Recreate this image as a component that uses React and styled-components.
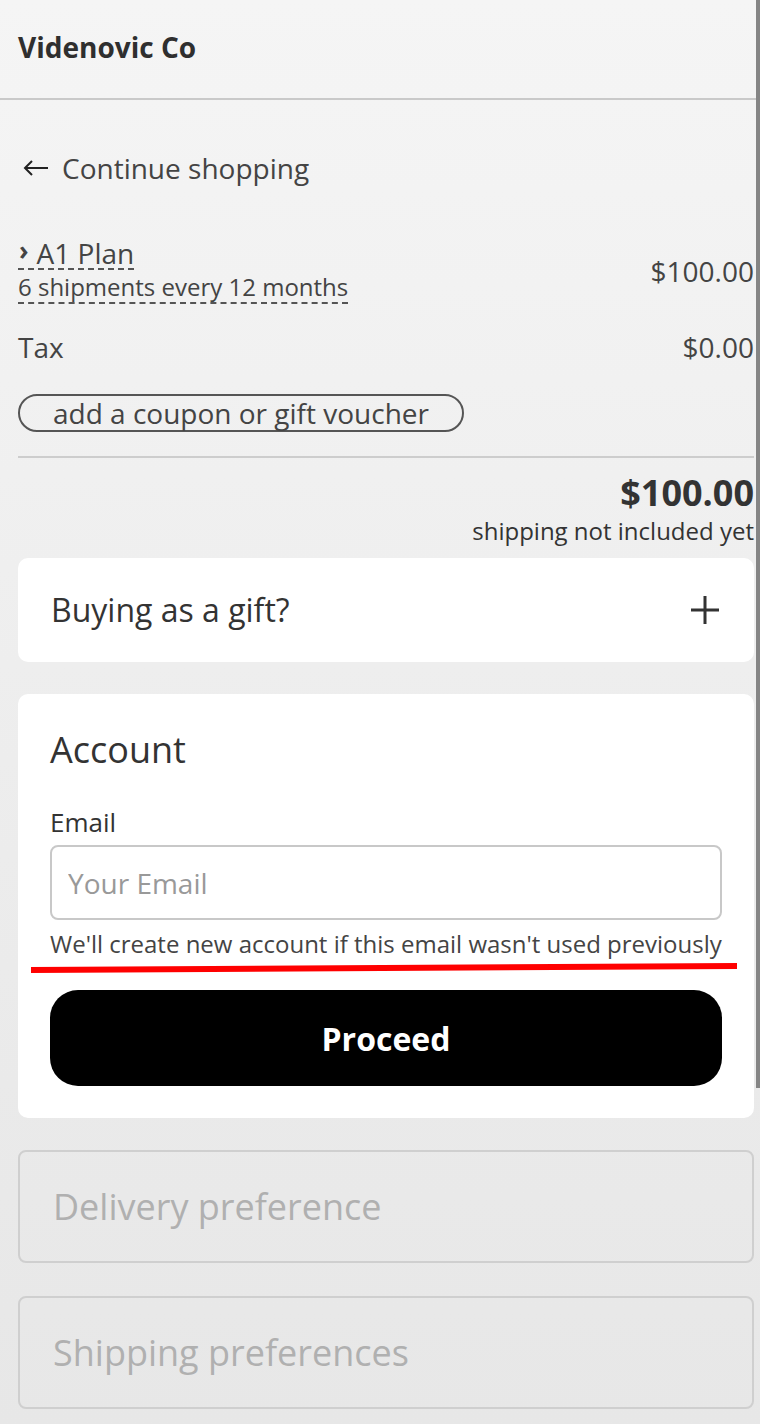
import React from "react";
import styled, { createGlobalStyle } from "styled-components";

const GlobalStyle = createGlobalStyle`
  html, body {
    margin: 0;
    padding: 0;
  }
  body {
    font-family: "Open Sans", "Noto Sans", "Liberation Sans", sans-serif;
    color: #333;
    background: linear-gradient(180deg, #f5f5f5 0%, #ececec 60%, #e7e7e7 100%);
    min-height: 1424px;
  }
  * { box-sizing: border-box; }
`;

const Page = styled.div`
  position: relative;
  width: 760px;
  min-height: 1424px;
  padding-right: 4px;
`;

const Scrollbar = styled.div`
  position: absolute;
  top: 0;
  right: 0;
  width: 4px;
  height: 1088px;
  background: #858585;
`;

const Header = styled.header`
  height: 100px;
  display: flex;
  align-items: center;
  padding: 0 0 5px 18px;
  border-bottom: 2px solid #c9c9c9;
`;

const Brand = styled.h1`
  margin: 0;
  font-size: 28px;
  font-weight: 700;
  color: #2f2f2f;
`;

const Main = styled.main`
  display: flex;
  flex-direction: column;
  padding: 0 2px 0 18px;
`;

const BackLink = styled.a`
  display: flex;
  align-items: center;
  gap: 13px;
  margin-top: 50px;
  height: 36px;
  font-size: 28px;
  color: #444;
  text-decoration: none;
  svg { margin-left: 5px; }
`;

const Row = styled.div`
  display: flex;
  justify-content: space-between;
  align-items: center;
  margin-top: ${(p) => p.$mt || 0}px;
`;

const PlanInfo = styled.div`
  display: flex;
  flex-direction: column;
  align-items: flex-start;
  gap: 2px;
`;

const Dashed = styled.span`
  display: inline-flex;
  align-items: center;
  gap: 8px;
  font-size: ${(p) => p.$size}px;
  line-height: 30px;
  color: #444;
  border-bottom: 2px dashed #555;
`;

const Chevron = styled.span`
  font-weight: 700;
  font-size: 26px;
  position: relative;
  top: -3px;
  margin-left: 1px;
`;

const Amount = styled.span`
  font-size: 28px;
  line-height: 36px;
  color: #444;
`;

const Label = styled.span`
  font-size: 28px;
  color: #444;
  line-height: 36px;
`;

const CouponButton = styled.button`
  align-self: flex-start;
  margin-top: 29px;
  height: 38px;
  padding: 0 33px;
  border: 2px solid #555;
  border-radius: 20px;
  background: transparent;
  font-family: inherit;
  font-size: 28px;
  color: #444;
  line-height: 34px;
`;

const Divider = styled.hr`
  width: 100%;
  margin: 24px 0 0;
  border: 0;
  border-top: 2px solid #cdcdcd;
`;

const Totals = styled.div`
  display: flex;
  flex-direction: column;
  align-items: flex-end;
  margin-top: 13px;
`;

const Total = styled.span`
  font-size: 36px;
  font-weight: 700;
  line-height: 44px;
  color: #333;
`;

const TotalNote = styled.span`
  margin-top: 1px;
  font-size: 24px;
  line-height: 30px;
  color: #333;
`;

const Card = styled.section`
  position: relative;
  background: #fff;
  border-radius: 10px;
  margin-top: ${(p) => p.$mt}px;
  padding: ${(p) => p.$pad};
`;

const GiftCard = styled(Card)`
  height: 104px;
  display: flex;
  align-items: center;
  justify-content: space-between;
`;

const CardTitle = styled.h2`
  margin: 0;
  font-weight: 400;
  font-size: ${(p) => p.$size}px;
  line-height: ${(p) => p.$lh}px;
  color: #333;
`;

const FieldLabel = styled.label`
  display: block;
  margin-top: 33px;
  font-size: 26px;
  line-height: 34px;
  color: #333;
`;

const Input = styled.input`
  display: block;
  width: 100%;
  height: 75px;
  margin-top: 6px;
  padding: 0 16px;
  border: 2px solid #c8c8c8;
  border-radius: 8px;
  font-family: inherit;
  font-size: 28px;
  color: #333;
  outline: none;
  &::placeholder { color: #999; }
`;

const Helper = styled.p`
  margin: 9px 0 0;
  font-size: 24px;
  line-height: 30px;
  color: #444;
  white-space: nowrap;
`;

const Annotation = styled.svg`
  position: absolute;
  left: 13px;
  top: 268px;
`;

const ProceedButton = styled.button`
  display: block;
  width: 100%;
  height: 96px;
  margin-top: 31px;
  border: 0;
  border-radius: 28px;
  background: #000;
  color: #fff;
  font-family: inherit;
  font-size: 32px;
  font-weight: 700;
`;

const Disabled = styled.section`
  height: 113px;
  margin-top: ${(p) => p.$mt}px;
  display: flex;
  align-items: center;
  padding-left: 33px;
  border: 2px solid #cfcfcf;
  border-radius: 8px;
  font-size: 36px;
  color: #b0b0b0;
`;

const ArrowLeft = () => (
  <svg width="26" height="16" viewBox="0 0 26 16" fill="none" stroke="#222" strokeWidth="2">
    <path d="M25 8H2M9 1L2 8l7 7" />
  </svg>
);

const Plus = () => (
  <svg width="30" height="30" viewBox="0 0 30 30" stroke="#333" strokeWidth="3">
    <path d="M15 1v28M1 15h28" />
  </svg>
);

export default function App() {
  return (
    <>
      <GlobalStyle />
      <Page>
        <Scrollbar />
        <Header>
          <Brand>Videnovic Co</Brand>
        </Header>
        <Main>
          <BackLink href="#">
            <ArrowLeft />
            Continue shopping
          </BackLink>

          <Row $mt={52}>
            <PlanInfo>
              <Dashed $size={28}>
                <Chevron>›</Chevron>A1 Plan
              </Dashed>
              <Dashed $size={24}>6 shipments every 12 months</Dashed>
            </PlanInfo>
            <Amount>$100.00</Amount>
          </Row>

          <Row $mt={25}>
            <Label>Tax</Label>
            <Amount>$0.00</Amount>
          </Row>

          <CouponButton>add a coupon or gift voucher</CouponButton>
          <Divider />

          <Totals>
            <Total>$100.00</Total>
            <TotalNote>shipping not included yet</TotalNote>
          </Totals>

          <GiftCard $mt={12} $pad="0 34px 0 33px">
            <CardTitle $size={32} $lh={40}>Buying as a gift?</CardTitle>
            <Plus />
          </GiftCard>

          <Card $mt={32} $pad="34px 32px 32px">
            <CardTitle $size={36} $lh={44}>Account</CardTitle>
            <FieldLabel htmlFor="email">Email</FieldLabel>
            <Input id="email" placeholder="Your Email" />
            <Helper>We'll create new account if this email wasn't used previously</Helper>
            <Annotation width="708" height="14" viewBox="0 0 708 14">
              <path d="M0 8 L706 4" stroke="#ff0000" strokeWidth="6" fill="none" />
            </Annotation>
            <ProceedButton>Proceed</ProceedButton>
          </Card>

          <Disabled $mt={32}>Delivery preference</Disabled>
          <Disabled $mt={33}>Shipping preferences</Disabled>
        </Main>
      </Page>
    </>
  );
}
